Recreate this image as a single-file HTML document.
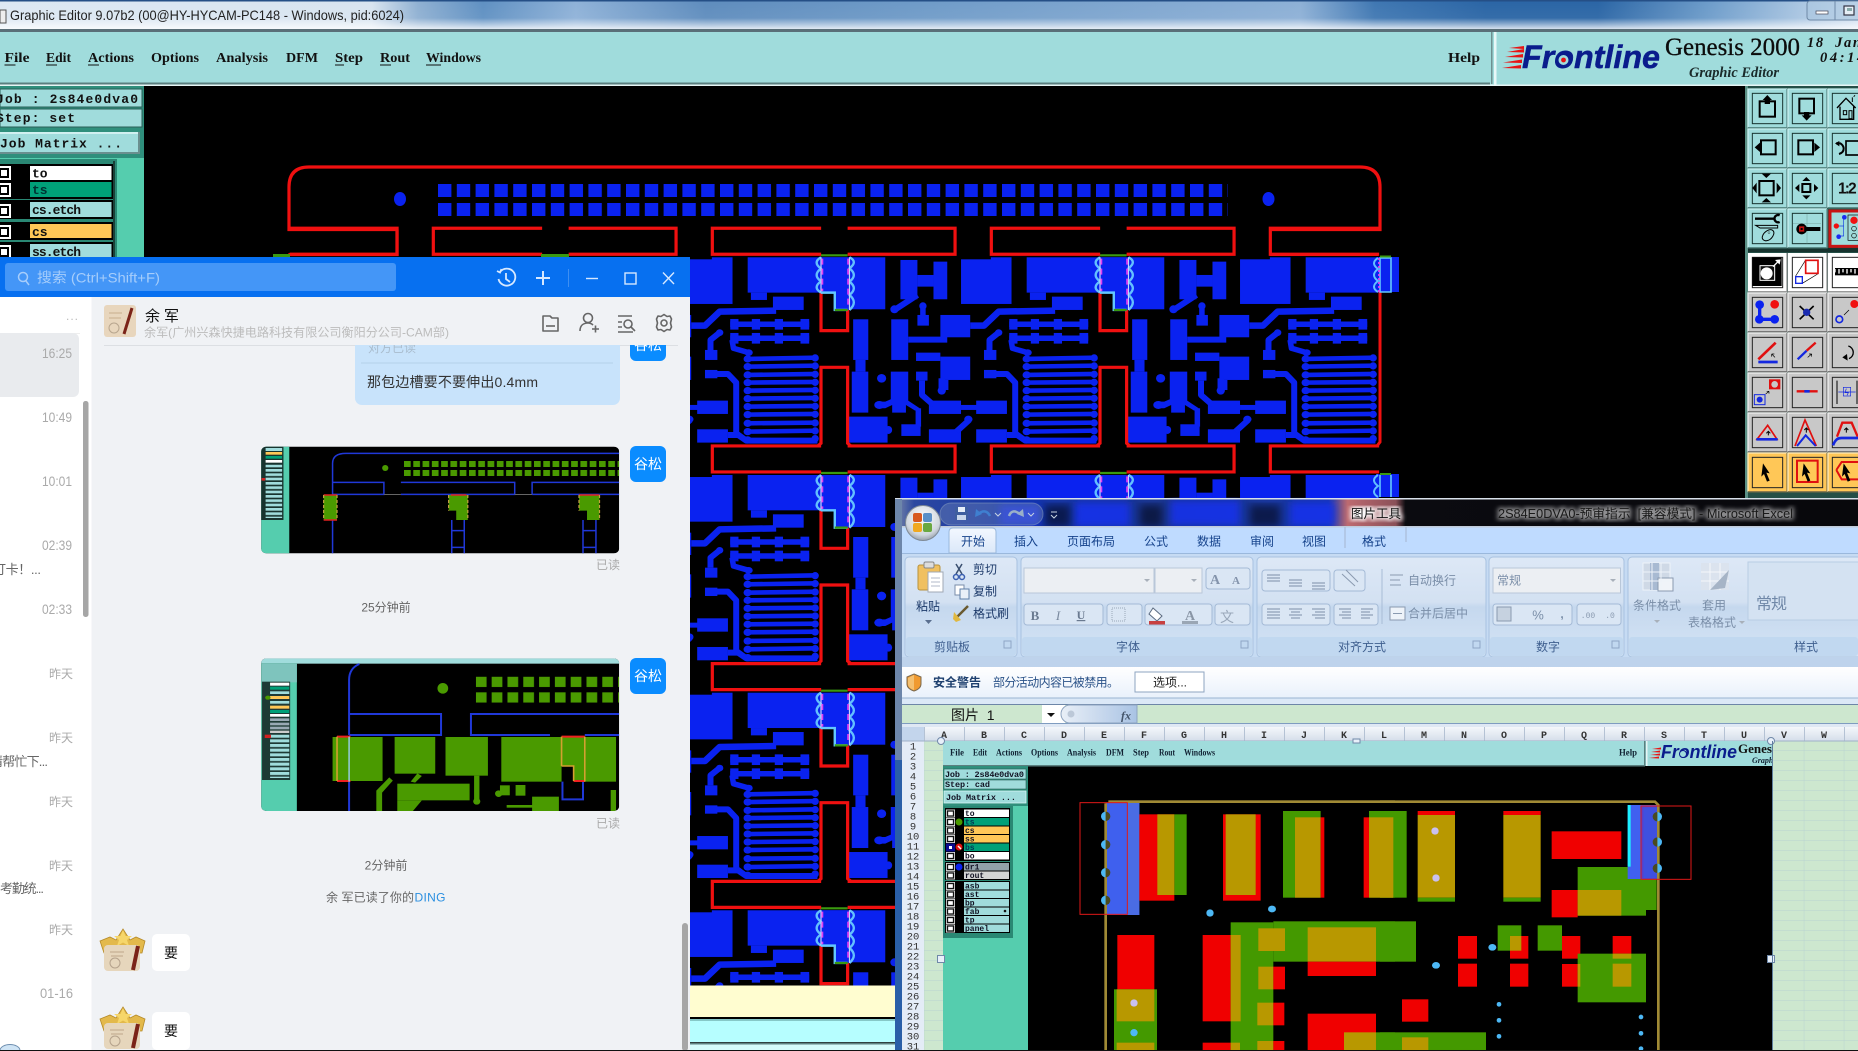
<!DOCTYPE html>
<html><head><meta charset="utf-8"><title>Screenshot</title>
<style>
html,body{margin:0;padding:0;background:#000;width:1858px;height:1051px;overflow:hidden}
svg{display:block}
text{white-space:pre}
.cn{font-family:"Liberation Sans","Noto Sans CJK SC",sans-serif}
.se{font-family:"Liberation Serif","Noto Serif CJK SC",serif}
.mo{font-family:"Liberation Mono",monospace}
.ns{vector-effect:non-scaling-stroke}
.xl{font-family:"Liberation Sans","Noto Sans CJK SC",sans-serif;font-size:12px;fill:#15428b}
.xd{font-family:"Liberation Sans","Noto Sans CJK SC",sans-serif;font-size:12px;fill:#7a8ea8}
.ch{font-family:"Liberation Mono",monospace;font-size:10px;font-weight:bold;fill:#333;text-anchor:middle}
.rh{font-family:"Liberation Mono",monospace;font-size:10.5px;fill:#333;text-anchor:middle}
.m{font-family:"Liberation Serif",serif;font-size:14px;font-weight:bold;fill:#111}
.ms{font-family:"Liberation Serif",serif;font-size:9.5px;font-weight:bold;fill:#123}
.lb{font-family:"Liberation Mono",monospace;font-size:13px;font-weight:bold;fill:#111}
.ls{font-family:"Liberation Mono",monospace;font-size:8px;font-weight:bold;fill:#112}
.t{font-family:"Liberation Sans","Noto Sans CJK SC",sans-serif;font-size:14px;fill:#aaa}
</style></head><body>
<svg xmlns="http://www.w3.org/2000/svg" width="1858" height="1051" viewBox="0 0 1858 1051">
<defs>
<linearGradient id="tb" x1="0" x2="1" y1="0" y2="0"><stop offset="0" stop-color="#dde8f3"/><stop offset=".2" stop-color="#d8e4f0"/><stop offset=".225" stop-color="#8fb0d2"/><stop offset=".26" stop-color="#5f90c2"/><stop offset=".31" stop-color="#8fb2d8"/><stop offset=".38" stop-color="#5e8cbd"/><stop offset=".5" stop-color="#6f9bc8"/><stop offset=".7" stop-color="#8db0d6"/><stop offset=".74" stop-color="#3f77b2"/><stop offset=".8" stop-color="#2a65a5"/><stop offset=".86" stop-color="#2a65a5"/><stop offset=".92" stop-color="#6d9cca"/><stop offset="1" stop-color="#cfdff0"/></linearGradient>
<linearGradient id="tv" x1="0" x2="0" y1="0" y2="1"><stop offset="0" stop-color="#fff" stop-opacity="0"/><stop offset=".62" stop-color="#fff" stop-opacity=".05"/><stop offset="1" stop-color="#fff" stop-opacity=".8"/></linearGradient>
<linearGradient id="gb" x1="0" x2="0" y1="0" y2="1"><stop offset="0" stop-color="#dde8f6"/><stop offset=".45" stop-color="#d3e1f2"/><stop offset=".5" stop-color="#c5d8ee"/><stop offset="1" stop-color="#d5e4f5"/></linearGradient>
<linearGradient id="sec" x1="0" x2="0" y1="0" y2="1"><stop offset="0" stop-color="#fff"/><stop offset="1" stop-color="#e9f1fb"/></linearGradient>
<linearGradient id="col" x1="0" x2="0" y1="0" y2="1"><stop offset="0" stop-color="#f4f7fb"/><stop offset="1" stop-color="#d5deea"/></linearGradient>
<linearGradient id="tab" x1="0" x2="0" y1="0" y2="1"><stop offset="0" stop-color="#f3f8ff"/><stop offset="1" stop-color="#dbe8f9"/></linearGradient>
<linearGradient id="pill" x1="0" x2="1" y1="0" y2="0"><stop offset="0" stop-color="#e9eff7"/><stop offset="1" stop-color="#a9c3e4"/></linearGradient>
<linearGradient id="xt" x1="0" x2="1" y1="0" y2="0"><stop offset="0" stop-color="#7d8aa8"/><stop offset=".02" stop-color="#2c48a0"/><stop offset=".13" stop-color="#1434a8"/><stop offset=".3" stop-color="#1a3488"/><stop offset=".45" stop-color="#1636a8"/><stop offset=".47" stop-color="#bd6a70"/><stop offset=".52" stop-color="#8a5058"/><stop offset=".53" stop-color="#0b0b10"/><stop offset="1" stop-color="#08080c"/></linearGradient>
<radialGradient id="ob" cx=".5" cy=".35" r=".7"><stop offset="0" stop-color="#fff"/><stop offset=".7" stop-color="#cfd6de"/><stop offset="1" stop-color="#8a929c"/></radialGradient>
<pattern id="pad" patternUnits="userSpaceOnUse" x="438" y="184" width="18.8" height="19"><rect width="13.4" height="13" fill="#0a22f0"/></pattern>
<pattern id="grid" patternUnits="userSpaceOnUse" x="924.3" y="741" width="40" height="10"><rect width="40" height="10" fill="#cde7cf"/><path d="M40 0V10M0 10H40" stroke="#b9d3d0" stroke-width="1" fill="none"/></pattern>
<pattern id="p1" patternUnits="userSpaceOnUse" x="905" y="633" width="20.8" height="27"><rect width="15" height="18" fill="#4a9a00"/></pattern>
<pattern id="p2" patternUnits="userSpaceOnUse" x="1066" y="110" width="35.4" height="47"><rect width="24" height="31" fill="#4a9a00"/></pattern>
<pattern id="st1" patternUnits="userSpaceOnUse" x="595" y="644" width="40" height="13"><rect width="40" height="8" fill="#a0dcdc"/></pattern>
<pattern id="st2" patternUnits="userSpaceOnUse" x="605" y="284" width="45" height="14"><rect width="45" height="9" fill="#a0dcdc"/></pattern>
<filter id="bl"><feGaussianBlur stdDeviation="4"/></filter>
<filter id="gl"><feGaussianBlur stdDeviation="2.5"/></filter>
<clipPath id="pcbclip"><rect x="143" y="86" width="1256" height="900"/></clipPath>
<clipPath id="im1"><rect x="585" y="590" width="802" height="320" rx="12" ry="14"/></clipPath>
<clipPath id="im2"><rect x="585" y="55" width="802" height="458" rx="12" ry="14"/></clipPath>
<clipPath id="emb"><rect x="1027" y="766" width="745" height="284"/></clipPath>
<clipPath id="mb"><rect x="340" y="345" width="340" height="70"/></clipPath>

<!-- PCB tile -->
<g id="t">
 <g fill="#0a22f0">
  <path d="M285 292H345V450H315V398H285Z"/><rect x="345" y="292" width="80" height="156"/>
  <rect x="458" y="300" width="37" height="118"/><rect x="530" y="305" width="30" height="113"/><rect x="495" y="345" width="35" height="35"/>
  <ellipse cx="445" cy="448" rx="9" ry="12"/>
  <ellipse cx="507" cy="438" rx="8" ry="11"/><rect x="501" y="438" width="12" height="30"/><rect x="495" y="465" width="25" height="32"/>
  <rect x="590" y="298" width="110" height="134"/><rect x="655" y="292" width="45" height="8"/>
  <rect x="733" y="292" width="160" height="106"/><rect x="740" y="398" width="35" height="22"/><rect x="788" y="410" width="67" height="40"/>
  <rect x="545" y="465" width="65" height="67"/>
  <rect x="355" y="478" width="33" height="122"/><rect x="360" y="600" width="22" height="35"/><rect x="352" y="635" width="36" height="123"/>
  <rect x="438" y="478" width="37" height="122"/><rect x="475" y="530" width="85" height="18"/>
  <rect x="492" y="578" width="53" height="25"/><rect x="545" y="590" width="65" height="70"/><ellipse cx="548" cy="692" rx="9" ry="12"/><rect x="541" y="655" width="14" height="38"/>
  <path d="M437 635H475V722L500 745L490 752L470 735L470 758H440V735L425 745L410 745V725H425L437 718Z"/><ellipse cx="412" cy="735" rx="11" ry="12"/>
  <rect x="491" y="745" width="12" height="55"/><rect x="460" y="793" width="42" height="35"/>
  <ellipse cx="417" cy="655" rx="10" ry="13"/>
  <rect x="492" y="635" width="25" height="27"/>
  <rect x="520" y="722" width="70" height="40"/><rect x="590" y="735" width="35" height="15"/><rect x="623" y="722" width="67" height="40"/>
  <rect x="345" y="770" width="85" height="78"/><ellipse cx="432" cy="810" rx="8" ry="12"/>
  <rect x="520" y="808" width="70" height="40"/><ellipse cx="606" cy="778" rx="9" ry="11"/>
  <rect x="623" y="808" width="67" height="40"/>
  <rect x="640" y="570" width="27" height="30"/><ellipse cx="672" cy="518" rx="8" ry="10"/>
  <rect x="640" y="630" width="27" height="25"/><ellipse cx="735" cy="578" rx="9" ry="10"/>
  <g><rect x="695" y="477" width="18" height="32"/><rect x="742" y="477" width="18" height="32"/><rect x="792" y="477" width="18" height="32"/><rect x="848" y="477" width="19" height="32"/></g>
  <rect x="695" y="519" width="18" height="32"/><rect x="742" y="519" width="18" height="32"/><rect x="792" y="519" width="18" height="32"/><rect x="848" y="519" width="19" height="32"/>
 </g>
 <g fill="none" stroke="#0a22f0" stroke-linejoin="round">
  <path class="ns" stroke-width="6" d="M495 405L445 450M556 660V690M505 662V705L530 735M580 815L608 780M690 825H712L730 842H885M652 570V540L672 518M665 642H690L708 668V820L730 842"/>
  <path class="ns" stroke-width="6.5" d="M795 452L672 455L640 497H610"/>
  <path class="ns" stroke-width="5.5" d="M695 493H867M695 535H867M699 540L702 565L735 578"/>
  <path class="ns" stroke-width="4.6" d="M733 597L885 593M733 620L885 617M733 645L885 642M733 668L885 666M733 692L885 690M733 716L885 714M733 740L885 738M733 764L885 762M733 790L885 788M733 815L885 812"/>
 </g>
 <g fill="#0a22f0"><ellipse cx="733" cy="597" rx="9" ry="11"/><ellipse cx="733" cy="620" rx="9" ry="11"/><ellipse cx="733" cy="645" rx="9" ry="11"/><ellipse cx="733" cy="668" rx="9" ry="11"/><ellipse cx="733" cy="692" rx="9" ry="11"/><ellipse cx="733" cy="716" rx="9" ry="11"/><ellipse cx="733" cy="740" rx="9" ry="11"/><ellipse cx="733" cy="764" rx="9" ry="11"/><ellipse cx="733" cy="790" rx="9" ry="11"/><ellipse cx="733" cy="815" rx="9" ry="11"/><ellipse cx="733" cy="840" rx="9" ry="11"/>
 <ellipse cx="880" cy="594" rx="8" ry="11"/><ellipse cx="880" cy="618" rx="8" ry="11"/><ellipse cx="880" cy="643" rx="8" ry="11"/><ellipse cx="880" cy="667" rx="8" ry="11"/><ellipse cx="880" cy="691" rx="8" ry="11"/><ellipse cx="880" cy="715" rx="8" ry="11"/><ellipse cx="880" cy="739" rx="8" ry="11"/><ellipse cx="880" cy="763" rx="8" ry="11"/><ellipse cx="880" cy="789" rx="8" ry="11"/><ellipse cx="880" cy="813" rx="8" ry="11"/><ellipse cx="880" cy="836" rx="8" ry="11"/></g>
</g>
<!-- slot decoration -->
<g id="d" fill="none">
 <path fill="#0a22f0" d="M285 292H345V450H315V398H285Z"/>
 <path class="ns" stroke="#63c0ff" stroke-width="2.4" stroke-linejoin="round" d="M285 292Q266 307 285 326Q266 345 285 364Q266 383 285 398"/>
 <path class="ns" stroke="#63c0ff" stroke-width="2.4" stroke-linejoin="round" d="M347 292Q366 305 347 325Q366 345 347 365Q366 385 347 405Q366 427 347 450"/>
 <path class="ns" stroke="#c0d4ff" stroke-width="1.2" d="M285 292V398M347 292V450"/>
 <path class="ns" stroke="#e040f0" stroke-width="1.8" stroke-dasharray="6 4" d="M288 296V394M344 296V446"/>
 <path class="ns" stroke="#63c8ff" stroke-width="2.4" d="M285 398H315V450H343"/>
 <path class="ns" stroke="#3a9a10" stroke-width="2.2" d="M285 286H343M315 450H343"/>
</g>
<g id="rb" fill="none" stroke="#f01010" stroke-width="3.2"><path class="ns" d="M343 858H577V936H343M893 858H656V936H893"/></g>
<g id="rs" fill="none" stroke="#f01010" stroke-width="3.2"><path class="ns" d="M285 398V512H343V450M278 858L285 850V622H343V850L350 858"/></g>

<!-- toolbar button bases, zoom units (1/3 px) -->
<g id="bT"><rect width="117" height="116" fill="#a0dcdc"/><path d="M0 116V0H117" stroke="#c8f0f0" stroke-width="4" fill="none"/><path d="M117 0V116H0" stroke="#5a8c88" stroke-width="4" fill="none"/><rect x="13" y="13" width="91" height="91" fill="none" stroke="#17332f" stroke-width="3"/></g>
<g id="bG"><rect width="117" height="116" fill="#c8c8c8"/><path d="M0 116V0H117" stroke="#eee" stroke-width="4" fill="none"/><path d="M117 0V116H0" stroke="#777" stroke-width="4" fill="none"/><rect x="13" y="13" width="91" height="91" fill="none" stroke="#222" stroke-width="3"/></g>
<g id="bY"><rect width="117" height="116" fill="#ffc757"/><path d="M0 116V0H117" stroke="#ffe9b5" stroke-width="4" fill="none"/><path d="M117 0V116H0" stroke="#8c7a4c" stroke-width="4" fill="none"/><rect x="13" y="13" width="91" height="91" fill="none" stroke="#222" stroke-width="3"/></g>
<g id="bW"><rect width="117" height="116" fill="#fff"/><path d="M117 0V116H0" stroke="#999" stroke-width="4" fill="none"/><rect x="13" y="13" width="91" height="91" fill="#fff" stroke="#222" stroke-width="3"/></g>
<path id="cur" d="M0 0L20 30L10 28L20 52L12 55L3 32L-5 40Z" fill="#000"/>
<g id="chs"><rect x="-1" y="-1" width="9" height="8" fill="#ddd"/><rect x=".5" y=".5" width="6" height="5" fill="#fff" stroke="#111" stroke-width="1.3"/></g>
<!-- avatars -->
<g id="av"><path d="M0 12L10 8L16 11L23 0L30 11L36 8L45 12L42 24H4Z" fill="#e3b94b" stroke="#b58a28" stroke-width=".8"/><polygon points="23,1 25.5,7 32,7 27,11 29,17 23,13.5 17,17 19,11 14,7 20.5,7" fill="#f6d66a"/><rect x="4" y="16" width="36" height="26" rx="4" fill="#e6d6bc"/><path d="M38 17L33 41" stroke="#7b2318" stroke-width="4"/><path d="M10 23h14M11 27h12" stroke="#bfa78a" stroke-width="1"/><circle cx="15" cy="34" r="5" fill="none" stroke="#b5a28c" stroke-width="1"/></g>
</defs>

<rect width="1858" height="1051" fill="#000"/>

<!-- ============ PCB ============ -->
<g clip-path="url(#pcbclip)">
 <rect x="438" y="184" width="790" height="32" fill="url(#pad)"/>
 <ellipse cx="400" cy="199" rx="6" ry="7" fill="#0a22f0"/><ellipse cx="1268.5" cy="199" rx="6" ry="7" fill="#0a22f0"/>
 <use href="#t" transform="translate(542,254.3) scale(.4591,.3333) translate(-285,-283)"/>
 <use href="#t" transform="translate(821,254.3) scale(.4591,.3333) translate(-285,-283)"/>
 <use href="#t" transform="translate(1100,254.3) scale(.4591,.3333) translate(-285,-283)"/>
 <use href="#t" transform="translate(542,472) scale(.4591,.3333) translate(-285,-283)"/>
 <use href="#t" transform="translate(821,472) scale(.4591,.3333) translate(-285,-283)"/>
 <use href="#t" transform="translate(1100,472) scale(.4591,.3333) translate(-285,-283)"/>
 <use href="#t" transform="translate(542,689.7) scale(.4591,.3333) translate(-285,-283)"/>
 <use href="#t" transform="translate(821,689.7) scale(.4591,.3333) translate(-285,-283)"/>
 <use href="#t" transform="translate(542,907.3) scale(.4591,.3333) translate(-285,-283)"/>
 <use href="#t" transform="translate(821,907.3) scale(.4591,.3333) translate(-285,-283)"/>
 <use href="#rs" transform="translate(821,254.3) scale(.4591,.3333) translate(-285,-283)"/>
 <use href="#rs" transform="translate(1100,254.3) scale(.4591,.3333) translate(-285,-283)"/>
 <use href="#rs" transform="translate(821,472) scale(.4591,.3333) translate(-285,-283)"/>
 <use href="#rs" transform="translate(821,689.7) scale(.4591,.3333) translate(-285,-283)"/>
 <use href="#rs" transform="translate(821,907.3) scale(.4591,.3333) translate(-285,-283)"/>
 <use href="#d" transform="translate(821,254.3) scale(.4591,.3333) translate(-285,-283)"/>
 <use href="#d" transform="translate(1100,254.3) scale(.4591,.3333) translate(-285,-283)"/>
 <use href="#d" transform="translate(821,472) scale(.4591,.3333) translate(-285,-283)"/>
 <use href="#d" transform="translate(1100,472) scale(.4591,.3333) translate(-285,-283)"/>
 <use href="#d" transform="translate(821,689.7) scale(.4591,.3333) translate(-285,-283)"/>
 <use href="#d" transform="translate(821,907.3) scale(.4591,.3333) translate(-285,-283)"/>
 <use href="#rb" transform="translate(263,36.6) scale(.4591,.3333) translate(-285,-283)"/>
 <use href="#rb" transform="translate(542,36.6) scale(.4591,.3333) translate(-285,-283)"/>
 <use href="#rb" transform="translate(821,36.6) scale(.4591,.3333) translate(-285,-283)"/>
 <use href="#rb" transform="translate(1100,36.6) scale(.4591,.3333) translate(-285,-283)"/>
 <use href="#rb" transform="translate(542,254.3) scale(.4591,.3333) translate(-285,-283)"/>
 <use href="#rb" transform="translate(821,254.3) scale(.4591,.3333) translate(-285,-283)"/>
 <use href="#rb" transform="translate(1100,254.3) scale(.4591,.3333) translate(-285,-283)"/>
 <use href="#rb" transform="translate(542,472) scale(.4591,.3333) translate(-285,-283)"/>
 <use href="#rb" transform="translate(821,472) scale(.4591,.3333) translate(-285,-283)"/>
 <use href="#rb" transform="translate(542,689.7) scale(.4591,.3333) translate(-285,-283)"/>
 <use href="#rb" transform="translate(821,689.7) scale(.4591,.3333) translate(-285,-283)"/>
 <!-- end slot on right -->
 <rect x="1376" y="257" width="23" height="35" fill="#0a22f0"/>
 <rect x="1376" y="474" width="23" height="23" fill="#0a22f0"/>
 <path d="M1380 292V442L1377 446M1270 254.5H1378M1270 472H1378" fill="none" stroke="#f01010" stroke-width="3"/>
 <path d="M1380 258V292H1391V258ZM1380 475V497M1391 475V497" fill="none" stroke="#63c8ff" stroke-width="1.6"/>
 <path d="M1378 258Q1370 263 1378 269Q1370 275 1378 281Q1370 287 1378 292M1378 475Q1370 480 1378 486Q1370 492 1378 497" fill="none" stroke="#63c0ff" stroke-width="2"/>
 <path d="M1380 256.5H1391M1380 474H1391" stroke="#3a9a10" stroke-width="2"/>
 <path d="M1379 258V292" stroke="#e040f0" stroke-width="1.8" stroke-dasharray="2 2"/>
 <path d="M397 229.5V254.5H290V253M397 229.5H289V187Q289 167 309 167H1360Q1380 167 1380 187V229.5H1270" fill="none" stroke="#f01010" stroke-width="3.2"/>
 <rect x="273" y="254" width="17" height="3" fill="#3a9a10"/>
 <rect x="541" y="254" width="28" height="3" fill="#3a9a10"/>
</g>

<!-- area below PCB, left of excel -->
<rect x="690" y="985.5" width="206" height="32" fill="#fffdd0"/>
<rect x="690" y="1017" width="206" height="2" fill="#000"/>
<rect x="690" y="1019" width="206" height="2" fill="#86c8c8"/>
<rect x="690" y="1021" width="206" height="21" fill="#b6feff"/>
<rect x="690" y="1042.5" width="206" height="2" fill="#5e8080"/>
<rect x="690" y="1044.5" width="206" height="6" fill="#d5fbfb"/>

<!-- ============ title bar ============ -->
<rect width="1858" height="29" fill="url(#tb)"/>
<rect width="1858" height="29" fill="url(#tv)"/>
<rect width="1858" height="1.5" fill="#254f86"/>
<rect y="29" width="1858" height="3" fill="#5a6f78"/>
<rect x="0" y="10" width="6" height="13" fill="#eee" stroke="#555" stroke-width="1"/>
<text x="10" y="20" class="cn" font-size="14" fill="#222" textLength="394" lengthAdjust="spacingAndGlyphs">Graphic Editor 9.07b2 (00@HY-HYCAM-PC148 - Windows, pid:6024)</text>
<rect x="1807" y="1" width="60" height="19" rx="3" fill="#a8c4de" fill-opacity=".55" stroke="#6f8aa8"/>
<line x1="1835" x2="1835" y1="1" y2="20" stroke="#6f8aa8"/>
<rect x="1816" y="11" width="12" height="3" fill="#fff" stroke="#445" stroke-width=".7"/>
<rect x="1844" y="6" width="10" height="9" fill="#e6eef6" stroke="#334" stroke-width="1.2"/>
<rect x="1847" y="8" width="5" height="3" fill="#8aa"/>

<!-- ============ menu bar ============ -->
<rect y="32" width="1858" height="53" fill="#a0dcdc"/>
<rect y="82.5" width="1490" height="2" fill="#5b7f7f"/>
<rect y="84.5" width="1858" height="1.5" fill="#e6f5f5"/>
<rect x="1491" y="32" width="1.5" height="52" fill="#6f9090"/>
<rect x="1494" y="32" width="2.5" height="54" fill="#e8f8f8"/>
<text class="m" x="4.5" y="62" textLength="25" lengthAdjust="spacingAndGlyphs">File</text><rect x="4.5" y="64.5" width="11" height="1" fill="#111"/>
<text class="m" x="46" y="62" textLength="25" lengthAdjust="spacingAndGlyphs">Edit</text><rect x="46" y="64.5" width="11" height="1" fill="#111"/>
<text class="m" x="88" y="62" textLength="46" lengthAdjust="spacingAndGlyphs">Actions</text><rect x="88" y="64.5" width="11" height="1" fill="#111"/>
<text class="m" x="151" y="62" textLength="48" lengthAdjust="spacingAndGlyphs">Options</text>
<text class="m" x="216" y="62" textLength="52" lengthAdjust="spacingAndGlyphs">Analysis</text>
<text class="m" x="286" y="62" textLength="32" lengthAdjust="spacingAndGlyphs">DFM</text>
<text class="m" x="335" y="62" textLength="28" lengthAdjust="spacingAndGlyphs">Step</text><rect x="335" y="64.5" width="9" height="1" fill="#111"/>
<text class="m" x="380" y="62" textLength="30" lengthAdjust="spacingAndGlyphs">Rout</text><rect x="380" y="64.5" width="11" height="1" fill="#111"/>
<text class="m" x="426" y="62" textLength="55" lengthAdjust="spacingAndGlyphs">Windows</text><rect x="426" y="64.5" width="15" height="1" fill="#111"/>
<text class="m" x="1448" y="62" textLength="32" lengthAdjust="spacingAndGlyphs">Help</text>
<!-- Frontline logo -->
<g fill="#e81414"><polygon points="1502,68 1521,65 1521,68.5"/><polygon points="1503,62.5 1522,59.5 1522,63"/><polygon points="1505,57 1523,54 1523,57.5"/><polygon points="1507,52 1524,49 1524,52.5"/><polygon points="1509,48 1524,46 1524,49"/></g>
<text x="1522" y="68" font-family="Liberation Sans" font-weight="bold" font-style="italic" font-size="32" fill="#0a1c8c" stroke="#0a1c8c" stroke-width=".5" textLength="138" lengthAdjust="spacingAndGlyphs">Frontline</text>
<circle cx="1563.5" cy="60" r="6" fill="#a0dcdc" stroke="#0a1c8c" stroke-width="2"/><circle cx="1563.5" cy="60" r="2.4" fill="#e81414"/>
<text x="1665" y="55" class="se" font-size="25" fill="#0c0c0c" stroke="#0c0c0c" stroke-width=".3" textLength="135" lengthAdjust="spacingAndGlyphs">Genesis 2000</text>
<text x="1689" y="77" class="se" font-size="15" font-weight="bold" font-style="italic" fill="#1a2a2a" textLength="90" lengthAdjust="spacingAndGlyphs">Graphic Editor</text>
<text x="1807" y="47" class="se" font-size="14.5" font-weight="bold" font-style="italic" fill="#111" letter-spacing="1.6">18  Jan</text>
<text x="1820" y="62" class="se" font-size="14.5" font-weight="bold" font-style="italic" fill="#111" letter-spacing="2.6">04:14</text>

<!-- ============ left panel ============ -->
<rect x="0" y="86" width="144" height="172" fill="#55cdae"/>
<rect x="0" y="86" width="144" height="72" fill="#2f8f7c"/>
<rect x="0" y="89" width="142" height="18" fill="#a0dcdc" stroke="#2a5f58"/>
<rect x="0" y="109" width="142" height="18" fill="#a0dcdc" stroke="#2a5f58"/>
<text class="lb" x="-4" y="103" font-size="14" textLength="142" style="font-weight:bold">Job : 2s84e0dva0</text>
<text class="lb" x="-4" y="122" font-size="14" textLength="79">Step: set</text>
<rect x="0" y="132" width="139" height="21" fill="#a0dcdc"/>
<path d="M0 133H138" stroke="#e0f7f7" stroke-width="1.5"/><path d="M139 132V153H0" fill="none" stroke="#6a8f8f" stroke-width="2"/>
<text class="lb" x="0" y="147.5" textLength="122">Job Matrix ...</text>
<rect x="0" y="159" width="144" height="99" fill="#55cdae"/>
<rect x="0" y="159" width="117" height="99" fill="#2a8874"/>
<rect x="113" y="161" width="2" height="97" fill="#1a4038"/>
<rect x="0" y="164" width="113" height="35" fill="#000"/>
<rect x="0" y="200" width="113" height="19" fill="#000"/>
<rect x="0" y="222" width="113" height="18" fill="#000"/>
<rect x="0" y="242" width="113" height="16" fill="#000"/>
<rect x="30" y="166" width="81.5" height="14" fill="#fff"/>
<rect x="30" y="182" width="81.5" height="15" fill="#00a078"/>
<rect x="30" y="202" width="81.5" height="15" fill="#a0dcdc"/>
<rect x="30" y="224" width="81.5" height="14" fill="#ffc757"/>
<rect x="30" y="244" width="81.5" height="14" fill="#a0dcdc"/>
<rect x="0" y="166" width="11" height="14" fill="#fff"/><rect x="0" y="168" width="9" height="10" fill="#000"/><rect x="1" y="170" width="6" height="6" fill="#fff"/>
<rect x="0" y="183" width="11" height="14" fill="#fff"/><rect x="0" y="185" width="9" height="10" fill="#000"/><rect x="1" y="187" width="6" height="6" fill="#fff"/>
<rect x="0" y="204" width="11" height="14" fill="#fff"/><rect x="0" y="206" width="9" height="10" fill="#000"/><rect x="1" y="208" width="6" height="6" fill="#fff"/>
<rect x="0" y="225" width="11" height="14" fill="#fff"/><rect x="0" y="227" width="9" height="10" fill="#000"/><rect x="1" y="229" width="6" height="6" fill="#fff"/>
<rect x="0" y="245" width="11" height="13" fill="#fff"/><rect x="0" y="247" width="9" height="10" fill="#000"/><rect x="1" y="249" width="6" height="6" fill="#fff"/>
<text class="lb" x="32" y="177.5">to</text>
<text class="lb" x="32" y="194" style="fill:#033">ts</text>
<text class="lb" x="32" y="214" textLength="49">cs.etch</text>
<text class="lb" x="32" y="236">cs</text>
<text class="lb" x="32" y="256" textLength="49">ss.etch</text>

<!-- ============ right toolbar ============ -->
<rect x="1745" y="86" width="113" height="413" fill="#244f47"/>
<rect x="1745" y="248" width="113" height="4" fill="#16332e"/>
<rect x="1745" y="86" width="3" height="413" fill="#5a8f84"/>
<g transform="translate(1745,86) scale(.33333)">
 <use href="#bT" x="9" y="9"/><use href="#bT" x="129" y="9"/><use href="#bT" x="249" y="9"/>
 <use href="#bT" x="9" y="129"/><use href="#bT" x="129" y="129"/><use href="#bT" x="249" y="129"/>
 <use href="#bT" x="9" y="249"/><use href="#bT" x="129" y="249"/><use href="#bT" x="249" y="249"/>
 <use href="#bT" x="9" y="369"/><use href="#bT" x="129" y="369"/>
 <rect x="44" y="46" width="46" height="46" fill="none" stroke="#000" stroke-width="6"/><polygon points="67,27 81,42 53,42" fill="#000"/><rect x="59" y="40" width="16" height="14" fill="#000"/>
 <rect x="163" y="38" width="44" height="44" fill="none" stroke="#000" stroke-width="6"/><polygon points="185,104 170,88 200,88" fill="#000"/><rect x="177" y="78" width="16" height="12" fill="#000"/>
 <path d="M276 66L303 37L332 66M285 62V100H326V62" fill="none" stroke="#000" stroke-width="4"/><rect x="295" y="74" width="10" height="12" fill="none" stroke="#000" stroke-width="3"/><rect x="312" y="74" width="9" height="24" fill="none" stroke="#000" stroke-width="3"/><path d="M322 48V34M326 32L330 28" stroke="#000" stroke-width="3"/>
 <rect x="48" y="163" width="44" height="42" fill="none" stroke="#000" stroke-width="6"/><polygon points="29,184 45,170 45,198" fill="#000"/>
 <rect x="160" y="163" width="44" height="42" fill="none" stroke="#000" stroke-width="6"/><polygon points="225,184 208,170 208,198" fill="#000"/>
 <rect x="303" y="165" width="42" height="42" fill="none" stroke="#000" stroke-width="5"/><path d="M273 172H286Q296 178 296 188Q296 200 282 204" fill="none" stroke="#000" stroke-width="6"/><polygon points="270,172 283,165 283,181" fill="#000"/>
 <rect x="43" y="285" width="43" height="43" fill="none" stroke="#000" stroke-width="6"/><polygon points="50,263 78,263 64,276" fill="#000"/><polygon points="50,349 78,349 64,336" fill="#000"/><polygon points="22,306 35,290 35,322" fill="#000"/><polygon points="108,306 95,290 95,322" fill="#000"/>
 <rect x="172" y="294" width="24" height="24" fill="none" stroke="#000" stroke-width="6"/><polygon points="172,285 196,285 184,273" fill="#000"/><polygon points="172,328 196,328 184,340" fill="#000"/><polygon points="150,306 163,294 163,318" fill="#000"/><polygon points="220,306 207,294 207,318" fill="#000"/>
 <text x="279" y="323" font-family="Liberation Sans" font-weight="bold" font-size="46" fill="#111" textLength="56" lengthAdjust="spacing">1:2</text>
 <path d="M30 398H88" stroke="#000" stroke-width="7"/><path d="M104 388A11 11 0 1 0 104 408" fill="none" stroke="#000" stroke-width="7"/>
 <path d="M32 418H98V426H45Z" fill="none" stroke="#000" stroke-width="3"/>
 <path d="M52 452C56 436 76 426 84 434C92 442 80 462 66 464C58 466 50 460 52 452Z" fill="none" stroke="#000" stroke-width="3"/><circle cx="72" cy="440" r="3" fill="none" stroke="#000"/>
 <path d="M144 412H228M186 384V472" stroke="#7fb0ab" stroke-width="2"/>
 <circle cx="170" cy="429" r="16" fill="#000"/><rect x="162" y="421" width="16" height="16" fill="#c01010"/><rect x="167" y="426" width="6" height="6" fill="#000"/><rect x="178" y="423" width="48" height="12" fill="#000"/>
 <rect x="255" y="375" width="120" height="106" fill="#a0dcdc" stroke="#c81414" stroke-width="9"/><rect x="309" y="387" width="40" height="76" fill="none" stroke="#000" stroke-width="2"/>
 <path d="M275 420H296V395M296 420V450H282" fill="none" stroke="#1a40e0" stroke-width="2"/><circle cx="298" cy="394" r="7" fill="#1a2bf0"/><circle cx="274" cy="420" r="8" fill="#f01010"/><circle cx="281" cy="452" r="7" fill="#1a2bf0"/>
 <circle cx="327" cy="403" r="11" fill="#f01010"/><circle cx="327" cy="428" r="7" fill="none" stroke="#000" stroke-width="2"/><circle cx="327" cy="449" r="7" fill="none" stroke="#000" stroke-width="2"/>
</g>
<g transform="translate(1745,250) scale(.33333)">
 <use href="#bW" x="9" y="9"/><use href="#bW" x="129" y="9"/><use href="#bW" x="249" y="9"/>
 <use href="#bG" x="9" y="129"/><use href="#bG" x="129" y="129"/><use href="#bG" x="249" y="129"/>
 <use href="#bG" x="9" y="249"/><use href="#bG" x="129" y="249"/><use href="#bG" x="249" y="249"/>
 <use href="#bG" x="9" y="369"/><use href="#bG" x="129" y="369"/><use href="#bG" x="249" y="369"/>
 <use href="#bG" x="9" y="489"/><use href="#bG" x="129" y="489"/><use href="#bG" x="249" y="489"/>
 <use href="#bY" x="9" y="609"/><use href="#bY" x="129" y="609"/><use href="#bY" x="249" y="609"/>
 <rect x="22" y="22" width="88" height="86" fill="#000"/><rect x="45" y="47" width="44" height="44" fill="#111" stroke="#fff" stroke-width="3"/><circle cx="65" cy="70" r="18" fill="#fff"/><path d="M84 50L102 32" stroke="#fff" stroke-width="4"/><polygon points="107,28 90,30 104,44" fill="#fff"/>
 <path d="M152 78L182 30H218M172 100L218 72" fill="none" stroke="#000" stroke-width="2"/><rect x="182" y="31" width="37" height="39" fill="none" stroke="#e01010" stroke-width="5"/><rect x="152" y="80" width="20" height="20" fill="none" stroke="#1428e0" stroke-width="4"/>
 <rect x="270" y="54" width="80" height="22" fill="#000"/><path d="M270 52V62M282 52V66M294 52V62M306 52V66M318 52V62M330 52V66M342 52V62" stroke="#fff" stroke-width="4" transform="translate(0,5)"/>
 <path d="M44 166V208H88" fill="none" stroke="#0a22f0" stroke-width="10"/><circle cx="44" cy="164" r="13" fill="#0a22f0"/><circle cx="43" cy="208" r="13" fill="#0a22f0"/><circle cx="89" cy="208" r="13" fill="#0a22f0"/><circle cx="89" cy="163" r="13" fill="#f01010"/>
 <path d="M164 168L206 208M206 168L164 208" stroke="#000" stroke-width="5"/><circle cx="185" cy="187" r="11" fill="#1a2bb0"/>
 <circle cx="328" cy="162" r="12" fill="#f01010"/><circle cx="283" cy="208" r="10" fill="none" stroke="#1428e0" stroke-width="5"/><path d="M297 195L312 180" stroke="#000" stroke-width="2"/>
 <path d="M40 328L92 278" stroke="#e01010" stroke-width="8"/><path d="M40 336H98" stroke="#1428e0" stroke-width="8"/><path d="M80 312L90 322M80 312V320M80 312H88" stroke="#000" stroke-width="2" fill="none"/>
 <path d="M158 328L185 302" stroke="#1428e0" stroke-width="7"/><path d="M185 302L212 278" stroke="#e01010" stroke-width="7"/><path d="M188 322L200 312M200 312H192M200 312V320" stroke="#000" stroke-width="2" fill="none"/>
 <path d="M310 288A20 20 0 0 1 312 326" fill="none" stroke="#000" stroke-width="4"/><polygon points="292,322 306,312 308,332" fill="#000"/>
 <rect x="72" y="388" width="34" height="30" fill="#e01010"/><circle cx="89" cy="403" r="10" fill="#c8c8c8"/>
 <rect x="28" y="434" width="32" height="30" fill="none" stroke="#1428e0" stroke-width="3"/><circle cx="44" cy="449" r="9" fill="#1428e0"/><path d="M62 432L72 424M72 424H65M72 424V431" stroke="#000" stroke-width="2" fill="none"/>
 <path d="M155 424H218" stroke="#e01010" stroke-width="7"/><rect x="178" y="420" width="16" height="8" fill="#1428e0"/>
 <path d="M276 392V462M336 392V462" stroke="#000" stroke-width="3"/><rect x="295" y="412" width="22" height="26" fill="none" stroke="#1428e0" stroke-width="2"/><path d="M280 426H332M304 416L300 428H310L306 436" stroke="#1428e0" stroke-width="2" fill="none"/>
 <path d="M36 568L68 526L96 568Z" fill="none" stroke="#e01010" stroke-width="5"/><path d="M34 568H98" stroke="#1428e0" stroke-width="8"/><path d="M70 556V544M64 550L70 544L76 550" stroke="#000" stroke-width="3" fill="none"/>
 <path d="M150 588L180 510L214 588" fill="none" stroke="#e01010" stroke-width="5"/><path d="M156 588L182 556L212 588" fill="none" stroke="#1428e0" stroke-width="6"/><path d="M184 548V534M178 540L184 534L190 540" stroke="#000" stroke-width="3" fill="none"/>
 <path d="M276 560L292 518H320L338 560" fill="none" stroke="#e01010" stroke-width="7"/><path d="M264 586C272 566 280 564 290 564H339" fill="none" stroke="#1428e0" stroke-width="8"/><path d="M304 548V534M298 540L304 534L310 540" stroke="#000" stroke-width="3" fill="none"/>
 <use href="#cur" x="54" y="640"/>
 <rect x="156" y="632" width="62" height="64" fill="none" stroke="#e01010" stroke-width="6"/><use href="#cur" x="176" y="640"/>
 <path d="M274 660L290 636H339M274 660L290 688H339" fill="none" stroke="#e01010" stroke-width="6"/><use href="#cur" x="296" y="640"/>
</g>

<!-- ============ chat window ============ -->
<rect x="0" y="257" width="690" height="40" fill="#0770f0"/>
<rect x="5" y="263" width="391" height="28" rx="3" fill="#4496f7"/>
<circle cx="23" cy="277" r="4.5" fill="none" stroke="#a6cdfb" stroke-width="1.5"/><path d="M26 281L29 285" stroke="#a6cdfb" stroke-width="1.5"/>
<text x="37" y="282.5" class="cn" font-size="14" fill="#a6cdfb" textLength="123" lengthAdjust="spacingAndGlyphs">搜索 (Ctrl+Shift+F)</text>
<g fill="none" stroke="#d6e8ff" stroke-width="1.8">
 <path d="M500 272A8.5 8.5 0 1 1 498.5 279M497 271L500 272.5L501.5 269"/><path d="M506 273V279L510 282"/>
 <path d="M543 271V285M536 278H550" stroke-width="2"/>
 <path d="M586 278.5H598" stroke-width="1.4"/>
 <rect x="625" y="273" width="11" height="11" stroke-width="1.4"/>
 <path d="M663 272.5L674 284M674 272.5L663 284" stroke-width="1.4"/>
</g>
<rect x="568" y="269" width="1" height="18" fill="#3e8ff2"/>
<rect x="0" y="297" width="91.5" height="754" fill="#fff"/>
<rect x="91.5" y="297" width="598.5" height="754" fill="#f0f2f5"/>
<text x="66" y="320" class="cn" font-size="12" fill="#bbb" letter-spacing="1">...</text>
<rect x="0" y="333" width="80" height="1" fill="#eee"/>
<rect x="-8" y="333" width="87" height="64" rx="6" fill="#e9ebee"/>
<text class="t" x="42" y="358" textLength="30" lengthAdjust="spacingAndGlyphs">16:25</text>
<text class="t" x="42" y="422" textLength="30" lengthAdjust="spacingAndGlyphs">10:49</text>
<text class="t" x="42" y="486" textLength="30" lengthAdjust="spacingAndGlyphs">10:01</text>
<text class="t" x="42" y="550" textLength="30" lengthAdjust="spacingAndGlyphs">02:39</text>
<text class="t" x="42" y="614" textLength="30" lengthAdjust="spacingAndGlyphs">02:33</text>
<text class="t" x="49" y="678" style="font-size:12px">昨天</text>
<text class="t" x="49" y="742" style="font-size:12px">昨天</text>
<text class="t" x="49" y="806" style="font-size:12px">昨天</text>
<text class="t" x="49" y="870" style="font-size:12px">昨天</text>
<text class="t" x="49" y="934" style="font-size:12px">昨天</text>
<text class="t" x="40" y="998" textLength="33" lengthAdjust="spacingAndGlyphs">01-16</text>
<text x="-7" y="574" class="cn" font-size="13" fill="#666" textLength="48">打卡！...</text>
<text x="-10" y="766" class="cn" font-size="13" fill="#666" textLength="58">请帮忙下...</text>
<text x="0" y="893" class="cn" font-size="13" fill="#666" textLength="44">考勤统...</text>
<rect x="83" y="401" width="5.5" height="216" rx="2.5" fill="#a6a6a6"/>
<!-- header -->
<rect x="104" y="305" width="32" height="32" rx="3" fill="#e8d6bd"/>
<path d="M132 308L124 334" stroke="#7b2318" stroke-width="3"/><path d="M109 313h13M109 318h12" stroke="#c7ae8d"/><circle cx="114" cy="328" r="5" fill="none" stroke="#b8a68f"/>
<text x="145" y="321" class="cn" font-size="15" fill="#111" textLength="34">余 军</text>
<text x="144" y="336.5" class="cn" font-size="12" fill="#bcbcbc" textLength="305" lengthAdjust="spacingAndGlyphs">余军(广州兴森快捷电路科技有限公司衡阳分公司-CAM部)</text>
<rect x="104" y="345" width="574" height="1" fill="#dcdfe3"/>
<g fill="none" stroke="#666" stroke-width="1.6">
 <path d="M543 316H550L552 318H558V331H543Z" stroke-linejoin="round"/><path d="M546 326H555"/>
 <circle cx="588" cy="318" r="4.5"/><path d="M580 331C580 325 584 323 588 323C590 323 592 324 593 325M592 329H599M595.5 325.5V332.5"/>
 <path d="M618 316H632M618 322H622M618 327H622M618 332H633"/><circle cx="628" cy="324" r="4"/><path d="M631 327L635 331"/>
 <path d="M664 314.5L667 316.5L670 316L671.5 319L670.5 323L671.5 327L670 330L667 329.5L664 331.5L661 329.5L658 330L656.5 327L657.5 323L656.5 319L658 316L661 316.5Z" stroke-linejoin="round"/><circle cx="664" cy="323" r="3"/>
</g>
<!-- first bubble -->
<g clip-path="url(#mb)">
 <rect x="355" y="320" width="265" height="85" rx="7" fill="#c8e3fb"/>
 <text x="368" y="352" class="cn" font-size="12" fill="#a9bccd">对方已读</text>
 <rect x="361" y="362.5" width="252" height="1" fill="#b4d0ea"/>
 <text x="367" y="387" class="cn" font-size="14" fill="#333" textLength="171">那包边槽要不要伸出0.4mm</text>
 <rect x="630" y="320" width="36" height="41" rx="6" fill="#0a8cff"/>
 <text x="648" y="350" class="cn" font-size="14" fill="#fff" text-anchor="middle">谷松</text>
</g>
<rect x="630" y="446" width="36" height="36" rx="6" fill="#0a8cff"/>
<text x="648" y="469" class="cn" font-size="14" fill="#fff" text-anchor="middle">谷松</text>
<rect x="630" y="658" width="36" height="36" rx="6" fill="#0a8cff"/>
<text x="648" y="681" class="cn" font-size="14" fill="#fff" text-anchor="middle">谷松</text>
<!-- image 1 -->
<g transform="translate(0,250) scale(.4464,.33333)"><g clip-path="url(#im1)">
 <rect x="585" y="590" width="802" height="320" fill="#000"/>
 <rect x="585" y="590" width="63" height="320" fill="#55cdae"/>
 <rect x="585" y="590" width="50" height="220" fill="#18332e"/>
 <rect x="595" y="594" width="37" height="9" fill="#a0dcdc"/><rect x="595" y="606" width="37" height="8" fill="#ffc757"/><rect x="595" y="618" width="37" height="8" fill="#00a078"/><rect x="595" y="630" width="37" height="8" fill="#fff"/>
 <rect x="595" y="644" width="37" height="160" fill="url(#st1)"/>
 <rect x="586" y="684" width="8" height="8" fill="#d02020"/>
 <rect x="905" y="633" width="482" height="45" fill="url(#p1)"/>
 <ellipse cx="863" cy="654" rx="7" ry="9" fill="#4a9a00"/>
 <g fill="none" stroke="#2038d8" stroke-width="1.5">
  <path class="ns" d="M745 910V640Q745 610 775 610H1387M745 697H860V733H745M898 697H1153V733H898M1192 733V697H1387M1192 733H1387"/>
  <path class="ns" d="M1012 810V910M1040 810V910M1012 842H1040M1012 892H1040M1306 810V910M1335 810V910M1306 842H1335M1306 892H1335"/>
 </g>
 <rect x="860" y="732" width="38" height="3" fill="#666"/><rect x="1153" y="732" width="39" height="3" fill="#666"/>
 <g fill="#4a9a00">
  <rect x="725" y="735" width="30" height="75"/>
  <path d="M1005 735H1048V810H1022V782H1005Z"/><path d="M1297 735H1343V810H1315V782H1297Z"/>
 </g>
 <path class="ns" d="M725 735H755M725 810H755M1010 735H1045M1297 735H1343" stroke="#e02020" stroke-width="1.4" fill="none"/>
 <path class="ns" d="M755 735V810M1048 735V810M1343 735V810M725 735V810M1005 735V782M1297 735V782" stroke="#c8a040" stroke-width="1.2" stroke-dasharray="3 2" fill="none"/>
</g></g>
<text x="596" y="569" class="cn" font-size="12" fill="#aaa">已读</text>
<text x="386" y="611.5" class="cn" font-size="12" fill="#666" text-anchor="middle">25分钟前</text>
<!-- image 2 -->
<g transform="translate(0,640) scale(.4464,.33333)"><g clip-path="url(#im2)">
 <rect x="585" y="55" width="802" height="458" fill="#000"/>
 <rect x="585" y="55" width="802" height="16" fill="#a0dcdc"/>
 <rect x="585" y="71" width="80" height="442" fill="#55cdae"/>
 <rect x="586" y="72" width="79" height="55" fill="#7ec4bd"/>
 <rect x="587" y="125" width="63" height="295" fill="#1e3a35"/>
 <rect x="605" y="128" width="43" height="9" fill="#fff"/><rect x="605" y="140" width="43" height="9" fill="#00a078"/><rect x="605" y="154" width="43" height="8" fill="#a0dcdc"/><rect x="605" y="168" width="43" height="9" fill="#ffc757"/><rect x="605" y="183" width="43" height="8" fill="#a0dcdc"/><rect x="605" y="197" width="43" height="9" fill="#ffc757"/><rect x="605" y="210" width="43" height="9" fill="#00a078"/><rect x="605" y="222" width="43" height="8" fill="#fff"/>
 <rect x="605" y="235" width="43" height="8" fill="#99aab5"/><rect x="605" y="248" width="43" height="8" fill="#99aab5"/><rect x="605" y="260" width="43" height="8" fill="#99aab5"/><rect x="605" y="272" width="43" height="7" fill="#ccc"/>
 <rect x="605" y="284" width="43" height="130" fill="url(#st2)"/>
 <circle cx="600" cy="173" r="6" fill="#4a9a00"/><rect x="593" y="284" width="14" height="10" fill="#d02020"/>
 <rect x="1066" y="110" width="321" height="78" fill="url(#p2)"/>
 <ellipse cx="992" cy="145" rx="12" ry="16" fill="#4a9a00"/>
 <path class="ns" d="M782 285V120Q782 85 805 72M782 222H988V285H782M1387 222H1055V285H1232M1310 285H1387M782 425V513M1260 425V478H1306V425" fill="none" stroke="#2038d8" stroke-width="2"/>
 <g fill="#4a9a00">
  <rect x="745" y="291" width="112" height="132"/><rect x="884" y="291" width="91" height="110"/><rect x="998" y="291" width="95" height="116"/><rect x="1123" y="291" width="135" height="134"/><rect x="1310" y="291" width="70" height="134"/><path d="M1258 291H1310V425H1285V378H1258Z"/>
  <rect x="890" y="431" width="162" height="50"/><path d="M890 481H945L925 513H890Z"/><rect x="1062" y="407" width="12" height="75"/><ellipse cx="1068" cy="484" rx="8" ry="10"/>
  <rect x="1155" y="435" width="22" height="32"/><rect x="1120" y="436" width="22" height="30"/><ellipse cx="1117" cy="461" rx="8" ry="10"/><rect x="1192" y="470" width="60" height="43"/><rect x="1135" y="495" width="60" height="8"/>
  <path d="M843 513V452L872 412L880 422L856 458V513Z"/><path d="M920 425L935 400L945 408L930 428Z"/><rect x="1368" y="450" width="12" height="63"/>
 </g>
 <path class="ns" d="M755 290H785M755 423H785M1258 290H1310M1285 423H1310" stroke="#f02020" stroke-width="2" fill="none"/>
 <path class="ns" d="M755 290V423M1258 378V290M1310 290V425M1258 378H1285V423" stroke="#d4a030" stroke-width="1.6" fill="none"/>
 <path class="ns" d="M782 290V425" stroke="#9ad0f0" stroke-width="1.4" fill="none"/>
</g></g>
<text x="596" y="827.5" class="cn" font-size="12" fill="#aaa">已读</text>
<text x="386" y="869.5" class="cn" font-size="12" fill="#666" text-anchor="middle">2分钟前</text>
<text x="326" y="901.5" class="cn" font-size="12" fill="#666" textLength="88">余 军已读了你的</text>
<text x="414.5" y="901.5" class="cn" font-size="12" fill="#2a8fe0" textLength="31">DING</text>
<use href="#av" x="100" y="929"/>
<rect x="152" y="934" width="38" height="37" rx="5" fill="#fff"/>
<text x="171" y="958" class="cn" font-size="14" fill="#111" text-anchor="middle">要</text>
<use href="#av" x="100" y="1007"/>
<rect x="152" y="1012" width="38" height="38" rx="5" fill="#fff"/>
<text x="171" y="1036" class="cn" font-size="14" fill="#111" text-anchor="middle">要</text>
<rect x="682" y="923" width="6" height="128" rx="3" fill="#a6a6a6"/>
<path d="M0 1050.5A10 6 0 0 1 20 1050.5" fill="#cfe4f5" stroke="#6f8fb0"/>
<rect x="0" y="1050" width="895" height="1" fill="#111"/>

<!-- ============ excel window ============ -->
<rect x="895" y="499" width="963" height="552" fill="#bfdbff"/>
<rect x="895" y="499" width="963" height="28" fill="url(#xt)"/>
<g filter="url(#bl)" fill="#1230f0" opacity=".85"><rect x="1000" y="505" width="40" height="20"/><rect x="1075" y="502" width="55" height="25"/><rect x="1170" y="500" width="70" height="26"/><rect x="1290" y="502" width="45" height="24"/></g>
<g filter="url(#bl)" fill="#000" opacity=".5"><rect x="1045" y="505" width="25" height="22"/><rect x="1140" y="505" width="22" height="22"/><rect x="1250" y="505" width="30" height="22"/></g>
<rect x="895" y="498" width="963" height="1.5" fill="#d8e0ea"/>
<rect x="895" y="499" width="7" height="552" fill="#6d86aa"/>
<rect x="895" y="760" width="7" height="291" fill="#2a5fa8"/>
<text x="1351" y="518" class="cn" font-size="12.5" fill="#fff" filter="url(#gl)" stroke="#fff" stroke-width="3" textLength="50">图片工具</text>
<text x="1351" y="518" class="cn" font-size="12.5" fill="#111" textLength="50">图片工具</text>
<text x="1498" y="518" class="cn" font-size="12.5" fill="#fff" filter="url(#gl)" stroke="#fff" stroke-width="3" opacity=".55" textLength="295" lengthAdjust="spacingAndGlyphs">2S84E0DVA0-预审指示  [兼容模式] - Microsoft Excel</text>
<text x="1498" y="518" class="cn" font-size="12.5" fill="#1a1a1a" textLength="295" lengthAdjust="spacingAndGlyphs">2S84E0DVA0-预审指示  [兼容模式] - Microsoft Excel</text>
<rect x="940" y="503" width="103" height="22" rx="11" fill="#7d92b8" fill-opacity=".35" stroke="#8ba2c2" stroke-opacity=".5"/>
<rect x="955" y="507" width="13" height="13" rx="1" fill="#3f5f9f"/><rect x="958" y="507" width="7" height="5" fill="#e6eef8"/><rect x="957" y="515" width="9" height="5" fill="#c9d7ec"/>
<path d="M978 514Q986 508 990 516" fill="none" stroke="#3f7fd0" stroke-width="2.5"/><polygon points="976,509 982,514 975,517" fill="#3f7fd0"/>
<path d="M1020 514Q1012 508 1009 516" fill="none" stroke="#9ab0c8" stroke-width="2.5"/><polygon points="1023,509 1017,514 1024,517" fill="#9ab0c8"/>
<path d="M995 513l3 3l3-3M1028 513l3 3l3-3M1051 512h6M1051 515l3 3l3-3" fill="none" stroke="#c6d2e0" stroke-width="1"/>
<!-- ribbon tabs -->
<rect x="902" y="526" width="956" height="27" fill="#bfdbff"/>
<rect x="902" y="526" width="956" height="1.5" fill="#c0cbda"/>
<path d="M1345 527V548M1406 527V542" stroke="#a4b6cf" stroke-width="1"/>
<path d="M949 553V532Q949 528 953 528H992Q996 528 996 532V553Z" fill="url(#tab)" stroke="#9ab8dc"/>
<text class="xl" x="973" y="545.5" text-anchor="middle">开始</text>
<text class="xl" x="1026" y="545.5" text-anchor="middle">插入</text>
<text class="xl" x="1091" y="545.5" text-anchor="middle">页面布局</text>
<text class="xl" x="1156" y="545.5" text-anchor="middle">公式</text>
<text class="xl" x="1209" y="545.5" text-anchor="middle">数据</text>
<text class="xl" x="1262" y="545.5" text-anchor="middle">审阅</text>
<text class="xl" x="1314" y="545.5" text-anchor="middle">视图</text>
<text class="xl" x="1374" y="545.5" text-anchor="middle">格式</text>
<!-- ribbon body -->
<rect x="902" y="553" width="956" height="114" fill="#c6dbf3"/>
<rect x="902" y="553" width="956" height="1" fill="#9ab8dc"/>
<g stroke="#a8c2e0">
 <rect x="905" y="557" width="112" height="100" rx="4" fill="url(#gb)"/>
 <rect x="1021" y="557" width="232" height="100" rx="4" fill="url(#gb)"/>
 <rect x="1257" y="557" width="229" height="100" rx="4" fill="url(#gb)"/>
 <rect x="1489" y="557" width="135" height="100" rx="4" fill="url(#gb)"/>
 <rect x="1628" y="557" width="240" height="100" rx="4" fill="url(#gb)"/>
</g>
<g fill="#c1d8f0"><rect x="906" y="637" width="110" height="19" rx="3"/><rect x="1022" y="637" width="230" height="19" rx="3"/><rect x="1258" y="637" width="227" height="19" rx="3"/><rect x="1490" y="637" width="133" height="19" rx="3"/><rect x="1629" y="637" width="229" height="19" rx="3"/></g>
<text class="xl" x="952" y="651" text-anchor="middle" style="fill:#3f5f8f">剪贴板</text>
<text class="xl" x="1128" y="651" text-anchor="middle" style="fill:#3f5f8f">字体</text>
<text class="xl" x="1362" y="651" text-anchor="middle" style="fill:#3f5f8f">对齐方式</text>
<text class="xl" x="1548" y="651" text-anchor="middle" style="fill:#3f5f8f">数字</text>
<text class="xl" x="1806" y="651" text-anchor="middle" style="fill:#3f5f8f">样式</text>
<g fill="none" stroke="#8ea6c6" stroke-width="1"><rect x="1004" y="641" width="7" height="7"/><rect x="1241" y="641" width="7" height="7"/><rect x="1473" y="641" width="7" height="7"/><rect x="1612" y="641" width="7" height="7"/></g>
<!-- clipboard -->
<rect x="918" y="565" width="22" height="25" rx="2" fill="#f0c060" stroke="#b8923c"/><rect x="924" y="562" width="10" height="6" rx="1.5" fill="#ddd" stroke="#888"/><path d="M928 572H943V592H928Z" fill="#fff" stroke="#a0a8b4"/><path d="M931 578H940M931 582H940M931 586H940" stroke="#b0b8c8"/>
<text class="xl" x="928" y="610.5" text-anchor="middle" style="fill:#1d3a6a">粘贴</text>
<polygon points="925,620 932,620 928.5,624" fill="#5a6f8f"/>
<path d="M956 564L962 574M962 564L956 574" stroke="#3a4f70" stroke-width="1.5"/><circle cx="956" cy="577" r="2.5" fill="none" stroke="#3a5fb0" stroke-width="1.5"/><circle cx="962" cy="577" r="2.5" fill="none" stroke="#3a5fb0" stroke-width="1.5"/>
<rect x="955" y="585" width="9" height="10" fill="#fff" stroke="#7a8ca8"/><rect x="960" y="589" width="9" height="10" fill="#eaf0f8" stroke="#5f7fa8"/>
<path d="M956 618L968 606" stroke="#6a5a30" stroke-width="2.5"/><path d="M954 612L961 620L956 622L953 619Z" fill="#e0b840"/>
<text class="xl" x="973" y="573.5" style="fill:#1d3a6a">剪切</text>
<text class="xl" x="973" y="595.5" style="fill:#1d3a6a">复制</text>
<text class="xl" x="973" y="617.5" style="fill:#1d3a6a" textLength="36">格式刷</text>
<!-- font -->
<rect x="1024" y="568" width="130" height="25" fill="#eceff3" stroke="#b9c7d9"/><rect x="1155" y="568" width="47" height="25" fill="#eceff3" stroke="#b9c7d9"/>
<polygon points="1144,579 1150,579 1147,582" fill="#a8b0ba"/><polygon points="1191,579 1197,579 1194,582" fill="#a8b0ba"/>
<g fill="#dae6f4" stroke="#a4bad6"><rect x="1206" y="568" width="44" height="21" rx="3"/><rect x="1024" y="604" width="79" height="21" rx="3"/><rect x="1107" y="604" width="35" height="21" rx="3"/><rect x="1145" y="604" width="67" height="21" rx="3"/><rect x="1215" y="604" width="35" height="21" rx="3"/><rect x="1262" y="570" width="68" height="21" rx="3"/><rect x="1334" y="570" width="31" height="21" rx="3"/><rect x="1262" y="604" width="68" height="21" rx="3"/><rect x="1334" y="604" width="44" height="21" rx="3"/><rect x="1493" y="604" width="79" height="21" rx="3"/><rect x="1577" y="604" width="44" height="21" rx="3"/></g>
<text x="1215" y="584" class="se" font-weight="bold" font-size="14" fill="#8494ac" text-anchor="middle">A</text>
<text x="1236" y="584" class="se" font-weight="bold" font-size="11" fill="#8494ac" text-anchor="middle">A</text>
<text x="1035" y="620" class="se" font-weight="bold" font-size="13" fill="#6a7a90" text-anchor="middle">B</text>
<text x="1058" y="620" class="se" font-style="italic" font-size="13" fill="#7a8a9f" text-anchor="middle">I</text>
<text x="1081" y="619" class="se" font-size="12" font-weight="bold" fill="#6a7a90" text-anchor="middle" text-decoration="underline">U</text>
<rect x="1112" y="608" width="13" height="13" fill="none" stroke="#9aa8b8" stroke-dasharray="1 1"/>
<path d="M1153 608L1162 616L1157 621L1149 614Z" fill="#fff" stroke="#5a6a80"/><rect x="1149" y="621" width="16" height="3.5" fill="#c84040"/>
<text x="1190" y="620" class="se" font-weight="bold" font-size="14" fill="#8a96a6" text-anchor="middle">A</text><rect x="1182" y="621" width="16" height="3" fill="#9aa6b4"/>
<text x="1227" y="622" class="cn" font-size="14" fill="#9aa8ba" text-anchor="middle">文</text>
<!-- align -->
<g stroke="#7c8fa8" stroke-width="1"><path d="M1267 575h13M1267 578h13M1267 581h13M1289 580h13M1289 583h13M1289 586h13M1312 583h13M1312 586h13M1312 589h13"/><path d="M1267 609h13M1267 612h13M1267 615h13M1267 618h13M1289 609h13M1291 612h9M1289 615h13M1291 618h9M1312 609h13M1315 612h10M1312 615h13M1315 618h10M1339 609h12M1342 612h9M1339 615h12M1342 618h9M1361 609h12M1361 612h9M1361 615h12M1361 618h9"/></g>
<path d="M1342 574L1355 586M1346 570L1358 582" stroke="#8a9ab0"/>
<rect x="1381.5" y="569" width="1" height="55" fill="#a8bcd6"/>
<path d="M1390 575H1403M1390 580H1400M1390 585H1401" stroke="#8a9ab0" fill="none"/><rect x="1390" y="607" width="15" height="13" fill="#eef3f9" stroke="#8a9ab0"/><path d="M1393 613.5H1402" stroke="#8a9ab0"/>
<text class="xd" x="1408" y="584.5" textLength="48">自动换行</text>
<text class="xd" x="1408" y="617.5" textLength="60">合并后居中</text>
<!-- number -->
<rect x="1493" y="568" width="127.5" height="25" fill="#eceff3" stroke="#b9c7d9"/>
<text class="xd" x="1497" y="584.5">常规</text><polygon points="1610,579 1616,579 1613,582" fill="#a8b0ba"/>
<rect x="1497" y="607" width="14" height="14" fill="#c6d2e0" stroke="#8a9ab0"/>
<text class="xd" x="1538" y="619.5" text-anchor="middle" style="font-size:13px">%</text>
<text class="xd" x="1562" y="618" text-anchor="middle" style="font-weight:bold">,</text>
<text x="1588" y="618" class="mo" font-size="8" fill="#8a9ab0" text-anchor="middle">.00</text>
<text x="1610" y="618" class="mo" font-size="8" fill="#8a9ab0" text-anchor="middle">.0</text>
<!-- styles -->
<g fill="#cfd9e6" stroke="#eef3f9"><rect x="1643" y="563" width="27" height="27"/></g>
<rect x="1650" y="563" width="9" height="27" fill="#a8bad2"/><rect x="1658" y="578" width="15" height="13" fill="#f0f4f9" stroke="#8a9ab0"/>
<path d="M1643 572H1670M1643 581H1670M1652 563V590M1661 563V590" stroke="#eef3f9"/>
<rect x="1701" y="563" width="28" height="27" fill="#dbe3ee"/><path d="M1701 572H1729M1701 581H1729M1710 563V590M1720 563V590" stroke="#f4f7fb"/>
<path d="M1710 590L1729 570L1725 588Z" fill="#a6b4c6"/>
<text class="xd" x="1657" y="609.5" text-anchor="middle" textLength="48">条件格式</text>
<polygon points="1654,620 1660,620 1657,623" fill="#a8b0ba"/>
<text class="xd" x="1714" y="609.5" text-anchor="middle">套用</text>
<text class="xd" x="1712" y="626.5" text-anchor="middle" textLength="48">表格格式</text>
<polygon points="1739,621 1745,621 1742,624" fill="#a8b0ba"/>
<rect x="1748" y="562" width="112" height="58" fill="#d4e2f2" stroke="#b9cde4"/>
<text x="1756" y="609" class="cn" font-size="16" fill="#7088a8" textLength="31">常规</text>
<!-- security bar -->
<rect x="902" y="657" width="956" height="10" fill="#bed3ec"/>
<rect x="902" y="667" width="956" height="31" fill="url(#sec)"/>
<rect x="902" y="698" width="956" height="6" fill="#dbe8f7"/>
<path d="M902 698H1858" stroke="#9ab4d2"/>
<path d="M914 674L921 677V684C921 688 917 690 914 691C911 690 907 688 907 684V677Z" fill="#f09a30" stroke="#7a6a50"/>
<path d="M914 675V690C911 689 908 687 908 684V678Z" fill="#f4c070"/>
<text x="933" y="686.5" class="cn" font-size="12" font-weight="bold" fill="#1d3f6e" textLength="48">安全警告</text>
<text x="993" y="686.5" class="cn" font-size="12" fill="#2a5288" textLength="126">部分活动内容已被禁用。</text>
<rect x="1135" y="672" width="69" height="20" fill="#fff" stroke="#8ea4c0"/>
<text x="1170" y="686.5" class="cn" font-size="12" fill="#222" text-anchor="middle">选项...</text>
<!-- formula bar -->
<rect x="902" y="704" width="956" height="1.5" fill="#6d86a8"/>
<rect x="902" y="705" width="956" height="18" fill="#cde7cf"/>
<rect x="902" y="723" width="956" height="1" fill="#7f9cc0"/>
<rect x="902" y="724" width="956" height="3" fill="#dfe8f4"/>
<text x="951" y="720" class="cn" font-size="14" fill="#111">图片  1</text>
<rect x="1042" y="705" width="23" height="18" fill="#fff"/>
<polygon points="1047,713 1055,713 1051,717" fill="#111"/>
<path d="M1070 705H1137V723H1070A9 9 0 0 1 1070 705Z" fill="url(#pill)" stroke="#8ea4c0"/>
<circle cx="1071" cy="714" r="3.5" fill="#bcc8d8"/>
<text x="1121" y="719.5" class="se" font-size="12" font-weight="bold" font-style="italic" fill="#44546a">fx</text>
<!-- headers -->
<rect x="902" y="727" width="956" height="14" fill="url(#col)"/>
<rect x="902" y="727" width="22" height="14" fill="#c3d5ec"/>
<rect x="902" y="741" width="22" height="310" fill="#e4ecf7"/>
<rect x="924" y="741" width="934" height="310" fill="url(#grid)"/>
<path d="M924.5 727V741M964.5 727V741M1004.5 727V741M1044.5 727V741M1084.5 727V741M1124.5 727V741M1164.5 727V741M1204.5 727V741M1244.5 727V741M1284.5 727V741M1324.5 727V741M1364.5 727V741M1404.5 727V741M1444.5 727V741M1484.5 727V741M1524.5 727V741M1564.5 727V741M1604.5 727V741M1644.5 727V741M1684.5 727V741M1724.5 727V741M1764.5 727V741M1804.5 727V741M1844.5 727V741" stroke="#b4c2d4"/>
<path d="M902 741H1858" stroke="#9fb1c8"/>
<g>
<text class="ch" x="944" y="738">A</text><text class="ch" x="984" y="738">B</text><text class="ch" x="1024" y="738">C</text><text class="ch" x="1064" y="738">D</text><text class="ch" x="1104" y="738">E</text><text class="ch" x="1144" y="738">F</text><text class="ch" x="1184" y="738">G</text><text class="ch" x="1224" y="738">H</text><text class="ch" x="1264" y="738">I</text><text class="ch" x="1304" y="738">J</text><text class="ch" x="1344" y="738">K</text><text class="ch" x="1384" y="738">L</text><text class="ch" x="1424" y="738">M</text><text class="ch" x="1464" y="738">N</text><text class="ch" x="1504" y="738">O</text><text class="ch" x="1544" y="738">P</text><text class="ch" x="1584" y="738">Q</text><text class="ch" x="1624" y="738">R</text><text class="ch" x="1664" y="738">S</text><text class="ch" x="1704" y="738">T</text><text class="ch" x="1744" y="738">U</text><text class="ch" x="1784" y="738">V</text><text class="ch" x="1824" y="738">W</text>
</g>
<g>
<text class="rh" x="913" y="749.5">1</text><text class="rh" x="913" y="759.5">2</text><text class="rh" x="913" y="769.5">3</text><text class="rh" x="913" y="779.5">4</text><text class="rh" x="913" y="789.5">5</text><text class="rh" x="913" y="799.5">6</text><text class="rh" x="913" y="809.5">7</text><text class="rh" x="913" y="819.5">8</text><text class="rh" x="913" y="829.5">9</text><text class="rh" x="913" y="839.5">10</text><text class="rh" x="913" y="849.5">11</text><text class="rh" x="913" y="859.5">12</text><text class="rh" x="913" y="869.5">13</text><text class="rh" x="913" y="879.5">14</text><text class="rh" x="913" y="889.5">15</text><text class="rh" x="913" y="899.5">16</text><text class="rh" x="913" y="909.5">17</text><text class="rh" x="913" y="919.5">18</text><text class="rh" x="913" y="929.5">19</text><text class="rh" x="913" y="939.5">20</text><text class="rh" x="913" y="949.5">21</text><text class="rh" x="913" y="959.5">22</text><text class="rh" x="913" y="969.5">23</text><text class="rh" x="913" y="979.5">24</text><text class="rh" x="913" y="989.5">25</text><text class="rh" x="913" y="999.5">26</text><text class="rh" x="913" y="1009.5">27</text><text class="rh" x="913" y="1019.5">28</text><text class="rh" x="913" y="1029.5">29</text><text class="rh" x="913" y="1039.5">30</text><text class="rh" x="913" y="1049.5">31</text>
</g>
<!-- ============ embedded image ============ -->
<rect x="943" y="741" width="829" height="310" fill="#000"/>
<rect x="943" y="741" width="829" height="25" fill="#a0dcdc"/>
<rect x="943" y="765" width="702" height="1.5" fill="#5b7f7f"/>
<rect x="1644" y="741" width="1.5" height="25" fill="#5b7f7f"/>
<rect x="1646" y="741" width="1.5" height="25" fill="#e6f5f5"/>
<text class="ms" x="950" y="755.5" textLength="14" lengthAdjust="spacingAndGlyphs">File</text><text class="ms" x="973" y="755.5" textLength="14" lengthAdjust="spacingAndGlyphs">Edit</text><text class="ms" x="996" y="755.5" textLength="26" lengthAdjust="spacingAndGlyphs">Actions</text><text class="ms" x="1031" y="755.5" textLength="27" lengthAdjust="spacingAndGlyphs">Options</text><text class="ms" x="1067" y="755.5" textLength="29" lengthAdjust="spacingAndGlyphs">Analysis</text><text class="ms" x="1106" y="755.5" textLength="18" lengthAdjust="spacingAndGlyphs">DFM</text><text class="ms" x="1133" y="755.5" textLength="16" lengthAdjust="spacingAndGlyphs">Step</text><text class="ms" x="1159" y="755.5" textLength="16" lengthAdjust="spacingAndGlyphs">Rout</text><text class="ms" x="1184" y="755.5" textLength="31" lengthAdjust="spacingAndGlyphs">Windows</text><text class="ms" x="1619" y="755.5" textLength="18" lengthAdjust="spacingAndGlyphs">Help</text>
<g fill="#e81414"><polygon points="1649,758 1659,756.5 1659,758.5"/><polygon points="1650,755 1660,753.5 1660,755.5"/><polygon points="1651,752 1660,750.5 1660,752.5"/><polygon points="1652,749 1661,747.5 1661,749.5"/></g>
<text x="1661" y="758" font-family="Liberation Sans" font-weight="bold" font-style="italic" font-size="18" fill="#0a1c8c" textLength="76" lengthAdjust="spacingAndGlyphs">Frontline</text>
<circle cx="1683" cy="754" r="3.5" fill="#a0dcdc" stroke="#0a1c8c"/>
<svg x="1738" y="741" width="34" height="25"><text x="0" y="12" class="se" font-size="13" fill="#111" font-weight="bold">Genesis</text><text x="14" y="22" class="se" font-size="8" font-style="italic" font-weight="bold" fill="#123">Graphic</text></svg>
<!-- embedded left panel -->
<rect x="943" y="766" width="85" height="285" fill="#55cdae"/>
<rect x="943" y="766" width="85" height="40" fill="#2f8f7c"/>
<rect x="944" y="769" width="82" height="10" fill="#a0dcdc" stroke="#2a5f58" stroke-width=".6"/>
<rect x="944" y="780" width="82" height="9" fill="#a0dcdc" stroke="#2a5f58" stroke-width=".6"/>
<rect x="944" y="791" width="82" height="12" fill="#a0dcdc" stroke="#d8f4f4" stroke-width=".8"/>
<text class="ls" x="945" y="777" style="font-size:8.5px" textLength="79">Job : 2s84e0dva0</text>
<text class="ls" x="945" y="787" style="font-size:8.5px" textLength="45">Step: cad</text>
<text class="ls" x="946" y="800" style="font-size:8.5px" textLength="70">Job Matrix ...</text>
<rect x="943" y="806" width="70" height="132" fill="#2a8874"/>
<rect x="945" y="808" width="65" height="53" fill="#000"/><rect x="945" y="862" width="65" height="18" fill="#000"/><rect x="945" y="881" width="65" height="52" fill="#000"/>
<g>
<rect x="964" y="809.5" width="45" height="7.5" fill="#fff"/><rect x="964" y="818" width="45" height="7.5" fill="#00a078"/><rect x="964" y="826.5" width="45" height="7.5" fill="#ffc757"/><rect x="964" y="835" width="45" height="7.5" fill="#ffc757"/><rect x="964" y="843.5" width="45" height="7.5" fill="#00a078"/><rect x="964" y="852" width="45" height="7.5" fill="#fff"/>
<rect x="964" y="863" width="45" height="7.5" fill="#93a2aa"/><rect x="964" y="871.5" width="45" height="7.5" fill="#d4d4d4"/>
<rect x="964" y="882" width="45" height="7.5" fill="#a0dcdc"/><rect x="964" y="890.5" width="45" height="7.5" fill="#a0dcdc"/><rect x="964" y="899" width="45" height="7.5" fill="#a0dcdc"/><rect x="964" y="907.5" width="45" height="7.5" fill="#a0dcdc"/><rect x="964" y="916" width="45" height="7.5" fill="#a0dcdc"/><rect x="964" y="924.5" width="45" height="7.5" fill="#a0dcdc"/>
</g>
<g>
<use href="#chs" x="947" y="810.5"/><use href="#chs" x="947" y="819"/><use href="#chs" x="947" y="827.5"/><use href="#chs" x="947" y="836"/><use href="#chs" x="947" y="853"/><use href="#chs" x="947" y="864"/><use href="#chs" x="947" y="872.5"/><use href="#chs" x="947" y="883"/><use href="#chs" x="947" y="891.5"/><use href="#chs" x="947" y="900"/><use href="#chs" x="947" y="908.5"/><use href="#chs" x="947" y="917"/><use href="#chs" x="947" y="925.5"/>
<rect x="946" y="843.5" width="9" height="8" fill="#0a0a90"/><rect x="949" y="846" width="3" height="3" fill="#fff"/>
</g>
<circle cx="959" cy="822" r="3.5" fill="#4a9a00"/><circle cx="959" cy="847" r="3.5" fill="#e01010"/><path d="M958 846L961 849" stroke="#fff" stroke-width="1.4"/><circle cx="959" cy="867" r="3.5" fill="#0a22f0"/>
<text class="ls" x="965" y="816">to</text><text class="ls" x="965" y="824.5" style="fill:#035">ts</text><text class="ls" x="965" y="833">cs</text><text class="ls" x="965" y="841.5">ss</text><text class="ls" x="965" y="850" style="fill:#035">bs</text><text class="ls" x="965" y="858.5">bo</text><text class="ls" x="965" y="869.5">dr1</text><text class="ls" x="965" y="878">rout</text><text class="ls" x="965" y="888.5">asb</text><text class="ls" x="965" y="897">ast</text><text class="ls" x="965" y="905.5">bp</text><text class="ls" x="965" y="914">fab</text><text class="ls" x="965" y="922.5">tp</text><text class="ls" x="965" y="931">panel</text>
<circle cx="1005" cy="911" r="1.3" fill="#111"/>
<!-- embedded canvas -->
<g clip-path="url(#emb)">
<g transform="translate(895,720) scale(.33333)">
 <rect x="632" y="248" width="101" height="337" fill="#3f60ee"/><rect x="697" y="248" width="36" height="337" fill="#4a6ce4"/>
 <rect x="733" y="283" width="105" height="259" fill="#f00000"/><rect x="787" y="283" width="51" height="242" fill="#b89800"/><rect x="838" y="283" width="37" height="242" fill="#449900"/>
 <rect x="984" y="283" width="113" height="259" fill="#f00000"/><rect x="992" y="283" width="90" height="242" fill="#b89800"/>
 <rect x="1164" y="273" width="113" height="260" fill="#449900"/><rect x="1200" y="292" width="77" height="241" fill="#b89800"/><rect x="1277" y="292" width="11" height="241" fill="#f00000"/>
 <rect x="1406" y="292" width="16" height="241" fill="#f00000"/><rect x="1422" y="273" width="78" height="260" fill="#449900"/><rect x="1422" y="292" width="72" height="241" fill="#b89800"/>
 <circle cx="945" cy="579" r="11" fill="#4db8f5"/><ellipse cx="1131" cy="567" rx="12" ry="10" fill="#4db8f5"/>
 <rect x="1007" y="607" width="128" height="383" fill="#449900"/><rect x="1135" y="604" width="365" height="121" fill="#449900"/>
 <rect x="1090" y="625" width="80" height="68" fill="#b89800"/><rect x="1238" y="622" width="205" height="103" fill="#b89800"/><rect x="1238" y="725" width="205" height="43" fill="#f00000"/>
 <rect x="667" y="645" width="111" height="163" fill="#f00000"/><rect x="657" y="808" width="129" height="182" fill="#449900"/><rect x="665" y="808" width="113" height="96" fill="#b89800"/><circle cx="717" cy="849" r="11" fill="#c9c0f0"/><circle cx="717" cy="938" r="11" fill="#4db8f5"/><rect x="665" y="968" width="113" height="22" fill="#b89800"/>
 <rect x="923" y="645" width="84" height="259" fill="#f00000"/><rect x="1007" y="645" width="30" height="259" fill="#b89800"/>
 <rect x="1090" y="740" width="45" height="68" fill="#b89800"/><rect x="1135" y="740" width="35" height="68" fill="#f00000"/>
 <rect x="1087" y="848" width="48" height="68" fill="#b89800"/><rect x="1135" y="848" width="33" height="68" fill="#f00000"/>
 <rect x="1087" y="963" width="48" height="27" fill="#b89800"/><rect x="1135" y="963" width="33" height="27" fill="#f00000"/>
 <rect x="923" y="968" width="84" height="22" fill="#f00000"/><rect x="1007" y="968" width="28" height="22" fill="#b89800"/>
 <rect x="1238" y="881" width="205" height="109" fill="#f00000"/><rect x="1347" y="937" width="96" height="53" fill="#b89800"/><rect x="1443" y="937" width="57" height="53" fill="#449900"/>
 <rect x="628" y="250" width="8" height="740" fill="#a08a35"/><rect x="640" y="241" width="860" height="8" fill="#a08a35"/>
 <rect x="555" y="248" width="142" height="335" fill="none" stroke="#e01818" stroke-width="3"/>
 <g><path d="M632 275A14 14 0 0 0 632 303Z" fill="#4db8f5"/><path d="M632 275A14 14 0 0 1 632 303Z" fill="#4a4a1e"/><path d="M632 360A14 14 0 0 0 632 388Z" fill="#4db8f5"/><path d="M632 360A14 14 0 0 1 632 388Z" fill="#4a4a1e"/><path d="M632 444A14 14 0 0 0 632 472Z" fill="#4db8f5"/><path d="M632 444A14 14 0 0 1 632 472Z" fill="#4a4a1e"/><path d="M632 527A14 14 0 0 0 632 555Z" fill="#4db8f5"/><path d="M632 527A14 14 0 0 1 632 555Z" fill="#4a4a1e"/></g>
</g>
<g transform="translate(1380,720) scale(.33333)">
 <rect x="0" y="273" width="80" height="260" fill="#449900"/><rect x="0" y="292" width="40" height="241" fill="#b89800"/>
 <rect x="113" y="273" width="112" height="12" fill="#f00000"/><rect x="113" y="285" width="112" height="248" fill="#b89800"/><rect x="113" y="533" width="112" height="12" fill="#449900"/>
 <circle cx="165" cy="333" r="11" fill="#c9c0f0"/><circle cx="168" cy="474" r="11" fill="#c9c0f0"/>
 <rect x="370" y="273" width="112" height="12" fill="#f00000"/><rect x="370" y="285" width="112" height="248" fill="#b89800"/><rect x="370" y="533" width="112" height="12" fill="#449900"/>
 <rect x="515" y="334" width="209" height="83" fill="#f00000"/>
 <rect x="593" y="441" width="205" height="146" fill="#449900"/><rect x="798" y="441" width="32" height="129" fill="#449900"/>
 <rect x="743" y="255" width="92" height="222" fill="#4060f0"/><rect x="743" y="255" width="9" height="185" fill="#1cf0ff"/><rect x="783" y="258" width="52" height="220" fill="#5a3fc8"/>
 <rect x="790" y="262" width="45" height="212" fill="#3f50e0"/>
 <rect x="515" y="510" width="78" height="82" fill="#f00000"/><rect x="593" y="510" width="131" height="77" fill="#b89800"/>
 <rect x="0" y="604" width="108" height="121" fill="#449900"/>
 <rect x="234" y="648" width="57" height="68" fill="#f00000"/><rect x="234" y="731" width="57" height="69" fill="#f00000"/>
 <ellipse cx="337" cy="682" rx="12" ry="10" fill="#4db8f5"/><ellipse cx="168" cy="736" rx="12" ry="10" fill="#4db8f5"/>
 <rect x="353" y="616" width="71" height="76" fill="#449900"/><rect x="390" y="648" width="55" height="68" fill="#f00000"/><rect x="390" y="648" width="34" height="44" fill="#b89800"/>
 <rect x="390" y="731" width="55" height="69" fill="#f00000"/>
 <rect x="473" y="616" width="73" height="76" fill="#449900"/><rect x="546" y="648" width="55" height="68" fill="#f00000"/><rect x="546" y="732" width="47" height="68" fill="#f00000"/>
 <rect x="593" y="701" width="205" height="146" fill="#449900"/><rect x="698" y="648" width="56" height="53" fill="#f00000"/><rect x="698" y="701" width="56" height="15" fill="#b89800"/><rect x="698" y="731" width="56" height="69" fill="#b89800"/><rect x="593" y="732" width="8" height="68" fill="#b89800"/>
 <rect x="66" y="838" width="79" height="67" fill="#f00000"/>
 <g fill="#4db8f5"><circle cx="357" cy="853" r="7"/><circle cx="357" cy="901" r="7"/><circle cx="357" cy="949" r="7"/><circle cx="783" cy="891" r="7"/><circle cx="783" cy="940" r="7"/><circle cx="783" cy="986" r="7"/></g>
 <rect x="0" y="937" width="318" height="53" fill="#449900"/><rect x="66" y="952" width="79" height="38" fill="#b89800"/>
 <path d="M0 245H825L835 255V990" fill="none" stroke="#a08a35" stroke-width="8"/>
 <rect x="783" y="258" width="150" height="220" fill="none" stroke="#e01818" stroke-width="3"/>
 <g><path d="M832 276A14 14 0 0 1 832 304Z" fill="#4db8f5"/><path d="M832 276A14 14 0 0 0 832 304Z" fill="#4a4a1e"/><path d="M832 352A14 14 0 0 1 832 380Z" fill="#4db8f5"/><path d="M832 352A14 14 0 0 0 832 380Z" fill="#4a4a1e"/><path d="M832 431A14 14 0 0 1 832 459Z" fill="#4db8f5"/><path d="M832 431A14 14 0 0 0 832 459Z" fill="#4a4a1e"/></g>
</g>
</g>
<!-- selection handles -->
<g fill="#e8f0fa" stroke="#6f88a8"><rect x="937.5" y="955.5" width="7" height="7"/><rect x="1767.5" y="955.5" width="7" height="7"/><circle cx="941" cy="741" r="3.5" fill="#e8f0fa"/><rect x="1353" y="739" width="7" height="4"/><circle cx="1771" cy="741" r="3.5"/></g>
<rect x="1772" y="741" width="1" height="310" fill="#5f7f9f"/>
<rect x="895" y="1050" width="963" height="1" fill="#111"/>
<!-- office button -->
<circle cx="923" cy="523" r="17.5" fill="url(#ob)" stroke="#7f8a96"/>
<rect x="913" y="513" width="9" height="9" rx="2" fill="#d85a20"/><rect x="923" y="513" width="9" height="9" rx="2" fill="#5a90c8"/><rect x="913" y="523" width="9" height="9" rx="2" fill="#f0a820"/><rect x="923" y="523" width="9" height="9" rx="2" fill="#6aa840"/>
</svg>
</body></html>
